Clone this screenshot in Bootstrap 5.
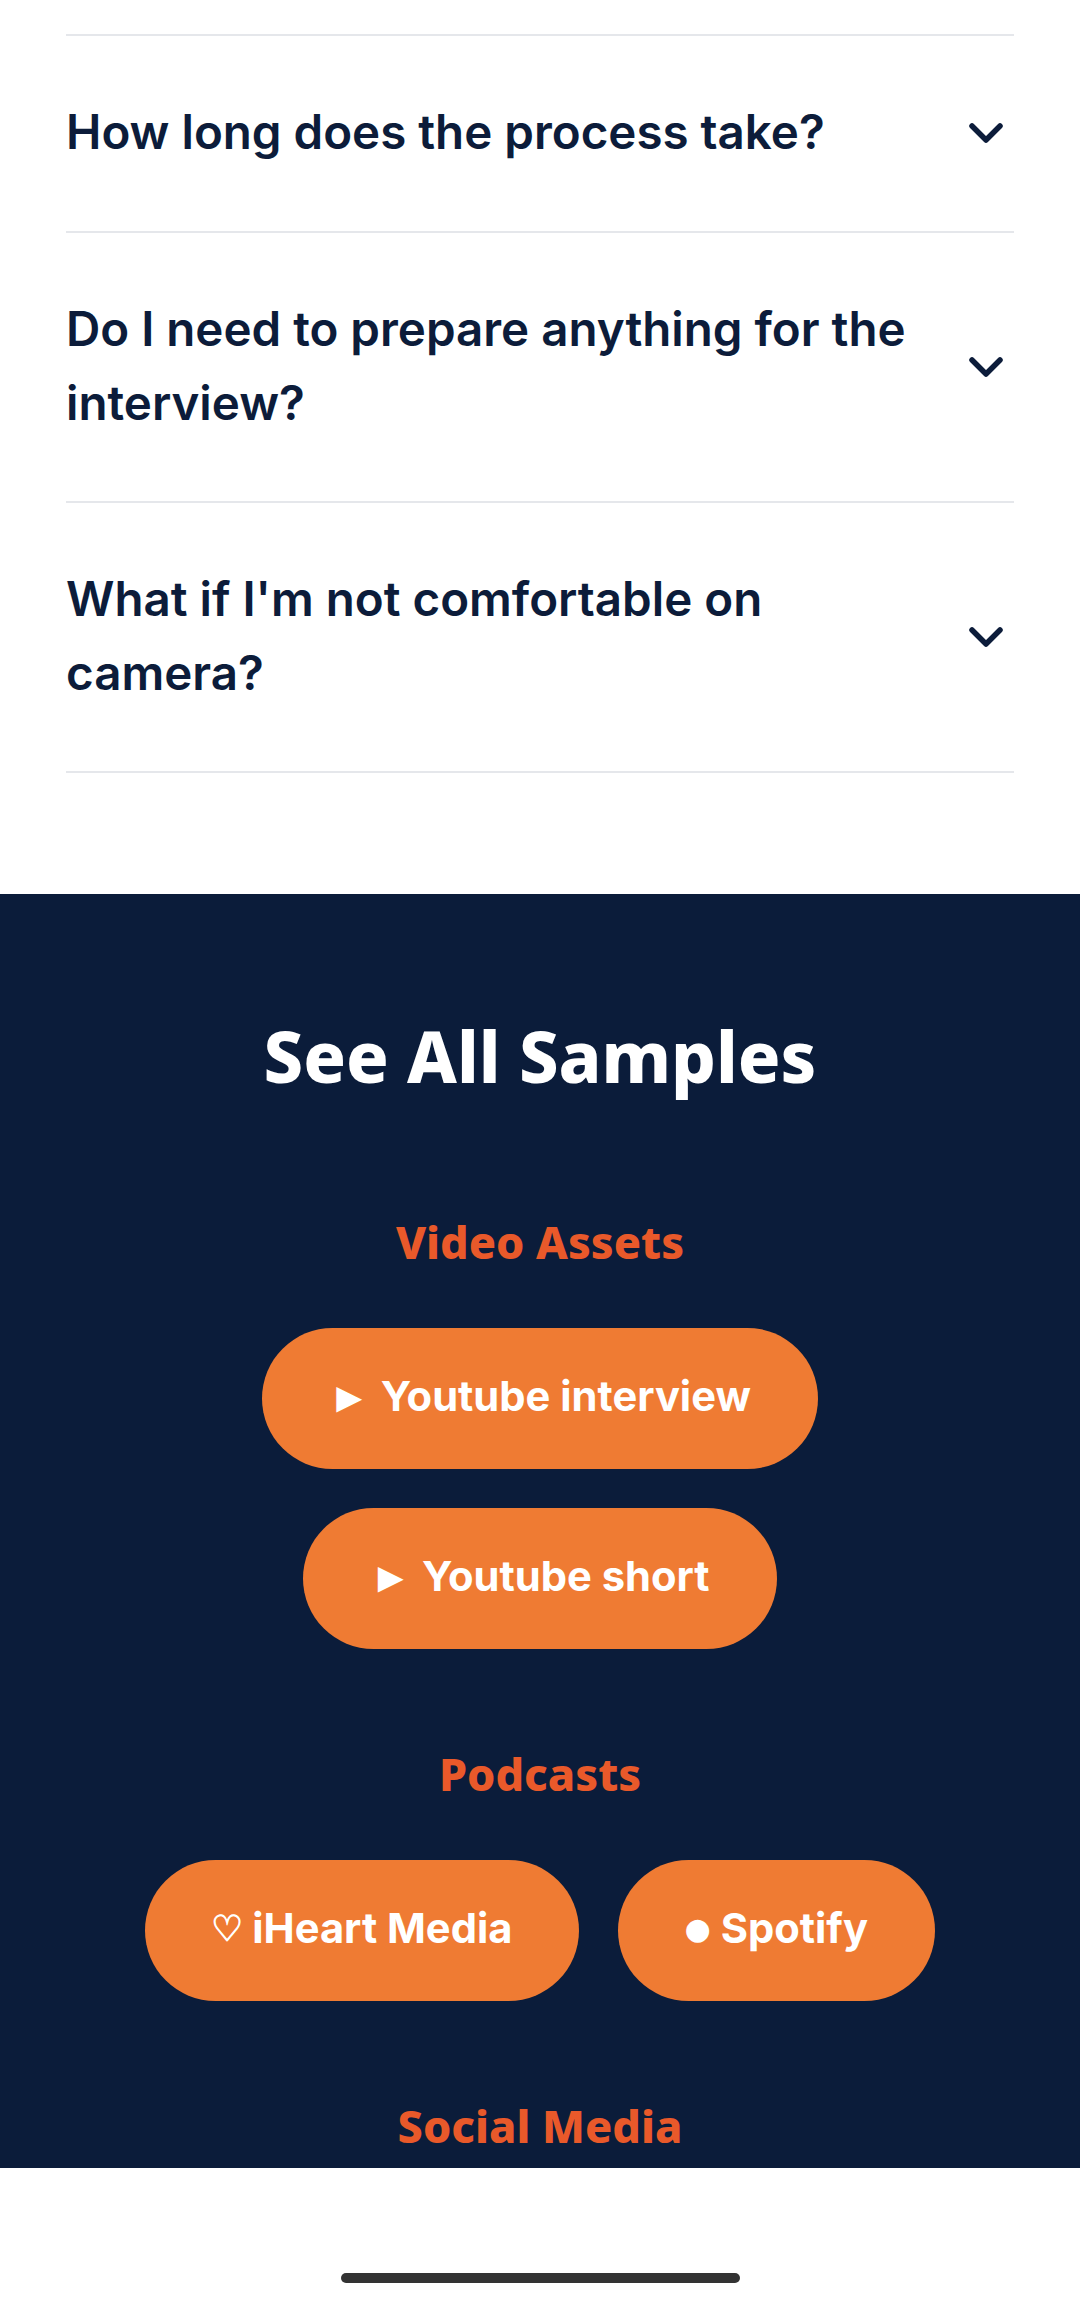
<!DOCTYPE html>
<html lang="en">
<head>
  <meta charset="UTF-8" />
  <meta name="viewport" content="width=device-width, initial-scale=1.0" />
  <title>FAQ and samples</title>
  <link href="https://cdn.jsdelivr.net/npm/bootstrap@5.3.3/dist/css/bootstrap.min.css" rel="stylesheet" />
  <style>
    body { background: #fff; font-family: "Inter", sans-serif; }
    .viewport-clip { height: 2168px; overflow: hidden; }
    .faq-wrap { padding: 34px 66px 121px; }
    .faq-row { border-top: 2px solid #e5e7eb; color: #0c1c3a; font-size: 47.5px; font-weight: 600; line-height: 74px; padding: 59px 0 61px; }
    .faq-row:first-child { padding-bottom: 62px; }
    .faq-row:last-child { border-bottom: 2px solid #e5e7eb; }
    .faq-row span { max-width: 880px; }
    .faq-row svg { width: 34px; height: 20px; margin: 2px 11px 0 0; flex-shrink: 0; }
    .samples { background: #0b1c3a; height: 1400px; padding-top: 114px; }
    .samples h2, .samples h3 { font-family: "Noto Sans", sans-serif; font-weight: 800; margin: 0; }
    .samples h2 { color: #fff; font-size: 70.5px; line-height: 96px; margin-bottom: 108px; }
    .samples h3 { color: #e9592a; font-size: 45px; line-height: 60px; }
    .pill-group { gap: 39px; margin: 56px 0 95px; }
    .pill-btn { background: #ef7b33; border-radius: 71px; color: #fff; font-size: 41.7px; font-weight: 700; height: 141px; line-height: 1; padding: 0 67px 3px 66px; text-decoration: none; }
    .btn-glyph { font-family: "Liberation Sans", sans-serif; font-weight: 400; }
    .btn-glyph.play { font-size: 43px; margin-right: 10px; }
    .btn-glyph.heart { font-family: "DejaVu Sans", sans-serif; font-size: 36px; margin-right: 9px; -webkit-text-stroke: 1px #fff; }
    .btn-glyph.dot { font-family: "DejaVu Sans", sans-serif; font-size: 30px; margin-right: 10px; }
    .home-bar { background: #333; border-radius: 5px; height: 10px; margin: 105px auto 0; width: 399px; }
  </style>
</head>
<body>
  <div class="viewport-clip">
    <div class="faq-wrap">
      <div class="faq-row d-flex justify-content-between align-items-center">
        <span>How long does the process take?</span>
        <svg viewBox="0 0 34 20" fill="none" stroke="#0c1c3a" stroke-width="5.5" stroke-linecap="round" stroke-linejoin="round"><path d="M3 3 17 17 31 3"/></svg>
      </div>
      <div class="faq-row d-flex justify-content-between align-items-center">
        <span>Do I need to prepare anything for the interview?</span>
        <svg viewBox="0 0 34 20" fill="none" stroke="#0c1c3a" stroke-width="5.5" stroke-linecap="round" stroke-linejoin="round"><path d="M3 3 17 17 31 3"/></svg>
      </div>
      <div class="faq-row d-flex justify-content-between align-items-center">
        <span>What if I'm not comfortable on camera?</span>
        <svg viewBox="0 0 34 20" fill="none" stroke="#0c1c3a" stroke-width="5.5" stroke-linecap="round" stroke-linejoin="round"><path d="M3 3 17 17 31 3"/></svg>
      </div>
    </div>
    <section class="samples text-center">
      <h2>See All Samples</h2>
      <h3>Video Assets</h3>
      <div class="pill-group d-flex flex-column align-items-center">
        <a class="pill-btn d-inline-flex align-items-center" href="#"><span class="btn-glyph play">►</span>Youtube interview</a>
        <a class="pill-btn d-inline-flex align-items-center" href="#"><span class="btn-glyph play">►</span>Youtube short</a>
      </div>
      <h3>Podcasts</h3>
      <div class="pill-group d-flex justify-content-center">
        <a class="pill-btn d-inline-flex align-items-center" href="#"><span class="btn-glyph heart">♡</span>iHeart Media</a>
        <a class="pill-btn d-inline-flex align-items-center" href="#"><span class="btn-glyph dot">●</span>Spotify</a>
      </div>
      <h3>Social Media</h3>
    </section>
  </div>
  <div class="home-bar"></div>
  <script src="https://cdn.jsdelivr.net/npm/bootstrap@5.3.3/dist/js/bootstrap.bundle.min.js"></script>
</body>
</html>
